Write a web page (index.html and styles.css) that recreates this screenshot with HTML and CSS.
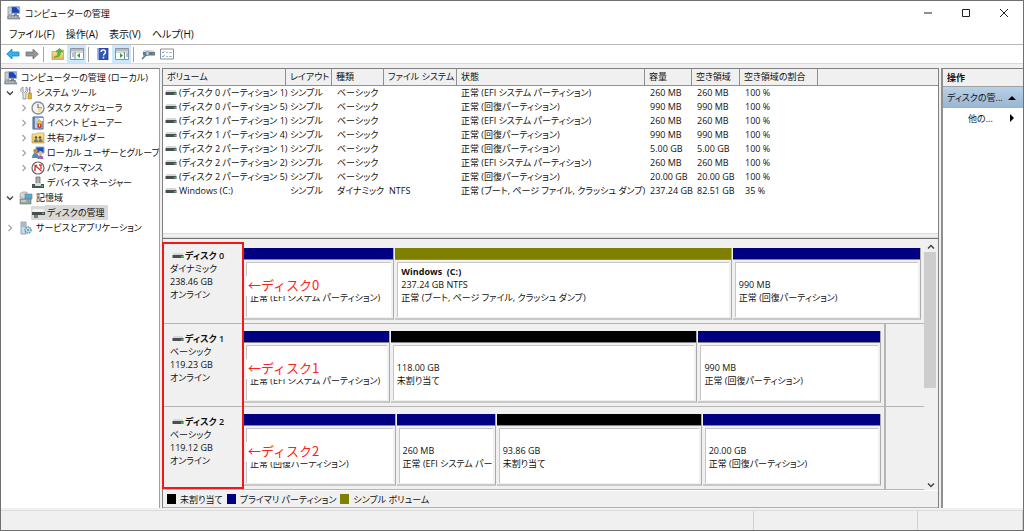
FILE: index.html
```
<!DOCTYPE html>
<html lang="ja">
<head>
<meta charset="utf-8">
<title>コンピューターの管理</title>
<link rel="stylesheet" href="styles.css">
</head>
<body>
<svg class="defs" aria-hidden="true">
  <defs>
    <linearGradient id="gold" x1="0" y1="0" x2="0" y2="1"><stop offset="0" stop-color="#f8e6a0"/><stop offset="1" stop-color="#dfb554"/></linearGradient>
    <symbol id="computer" viewBox="0 0 14 14">
      <path d="M1 1h4v8H1z" fill="#c9ced4" stroke="#7d858e" stroke-width=".7"/>
      <path d="M4.500.7h8.200v6.600H4.500z" fill="#1c43b8" stroke="#aab2ba" stroke-width=".9"/>
      <path d="M9 1.200h3.200v3.500z" fill="#9cc4f4"/>
      <path d="M7 7.500h3v1.500H7zM5.500 9h6v1h-6z" fill="#7b838b"/>
      <path d="M.7 9.800h10.600l1.700 3.200H.7z" fill="#9ba1a8" stroke="#646b72" stroke-width=".6"/>
      <path d="M2 11h1.500M5 11h1.500M8 11h1.500" stroke="#eee" stroke-width=".8"/>
    </symbol>
    <symbol id="disk" viewBox="0 0 12 8">
      <path d="M1.500 1h9L11.500 3H.5z" fill="#d5d7d9"/>
      <path d="M.5 3h11v3H.5z" fill="#4a4e50"/>
      <path d="M9 4h2v1.500H9z" fill="#31d843"/>
    </symbol>
    <symbol id="chevron-down" viewBox="0 0 8 8"><path d="M1 2.500l3 3 3-3" fill="none" stroke="#444" stroke-width="1.400"/></symbol>
    <symbol id="chevron-right" viewBox="0 0 8 8"><path d="M2.500 1l3 3-3 3" fill="none" stroke="#a3a3a3" stroke-width="1.200"/></symbol>
    <symbol id="arrow" viewBox="0 0 14 12"><path d="M.7 6L6 1v3h7v4H6v3z" stroke-width=".8" stroke="currentColor"/></symbol>
    <symbol id="arrow-right" viewBox="0 0 14 12"><path d="M13.300 6L8 1v3H1v4h7v3z" stroke-width=".8" stroke="currentColor"/></symbol>
    <symbol id="pane" viewBox="0 0 14 12">
      <path d="M.5.5h13v11H.5z" fill="#fff" stroke="#8a939c"/>
      <path d="M1 1h12v2H1z" fill="#b6bdc5"/><path d="M1 4h12" stroke="#8a939c" stroke-width=".7"/>
    </symbol>
  </defs>
</svg>
<div class="window">
  <header class="titlebar">
    <svg class="icon14"><use href="#computer"/></svg>
    <h1 class="title">コンピューターの管理</h1>
    <div class="controls">
      <button aria-label="最小化"><svg viewBox="0 0 10 10"><path d="M1 5h8"/></svg></button>
      <button aria-label="最大化"><svg viewBox="0 0 10 10"><path d="M1.500 1.500h7v7h-7z"/></svg></button>
      <button aria-label="閉じる"><svg viewBox="0 0 10 10"><path d="M1 1l8 8M9 1l-8 8"/></svg></button>
    </div>
  </header>
  <nav class="menubar">
    <button>ファイル(F)</button><button>操作(A)</button><button>表示(V)</button><button>ヘルプ(H)</button>
  </nav>
  <div class="toolbar">
    <button aria-label="戻る" class="back"><svg viewBox="0 0 14 12"><use href="#arrow"/></svg></button>
    <button aria-label="進む" class="forward"><svg viewBox="0 0 14 12"><use href="#arrow-right"/></svg></button>
    <span class="sep"></span>
    <button aria-label="上へ"><svg viewBox="0 0 14 12"><path d="M1 3.500h4l1-1.500h6.500v9.500H1z" fill="url(#gold)" stroke="#b99a4e" stroke-width=".7"/><path d="M3 9c3 0 4-2 4-5H5l3.500-3.700L12 4H9.500C9.500 7.500 7.500 10 3 9z" fill="#55bf38" stroke="#38952a" stroke-width=".5"/></svg></button>
    <button aria-label="コンソール ツリー" class="on"><svg viewBox="0 0 14 12"><use href="#pane"/><path d="M5 4v7M2 6h2M2 8h2" stroke="#6e8298"/><path d="M10 5v5L7 7.500z" fill="#27a52b"/></svg></button>
    <span class="sep"></span>
    <button aria-label="ヘルプ"><svg viewBox="0 0 14 12"><path d="M2 0h10v12H2z" fill="#3157b7" stroke="#1b357f" stroke-width=".7"/><path d="M2.500 0v12" stroke="#8ba4df"/><path d="M5 4c0-3 4.500-2.700 4.500 0 0 1.700-2 1.700-2 3.500M7.500 8.800v1.600" fill="none" stroke="#fff" stroke-width="1.400"/></svg></button>
    <button aria-label="操作ウィンドウ" class="on"><svg viewBox="0 0 14 12"><use href="#pane"/><path d="M9.500 4v7M11 6h2M11 8h2" stroke="#6e8298"/><path d="M5 5v5l3-2.500z" fill="#27a52b"/></svg></button>
    <span class="sep"></span>
    <button aria-label="ディスク"><svg viewBox="0 0 14 12"><path d="M3 2h9l2 2.500H1.500z" fill="#d6dade"/><path d="M2 4h12v3.500H2z" fill="#68747d"/><path d="M11.500 5h1.500v1.300h-1.500z" fill="#36d04d"/><path d="M6 6L1 11" stroke="#47718d" stroke-width="1.500"/><circle cx="6.500" cy="5.500" r="2" fill="#a7cbe1" stroke="#55758c" stroke-width=".6"/></svg></button>
    <button aria-label="設定"><svg viewBox="0 0 14 12"><path d="M.5 1h13v10H.5z" fill="#fff" stroke="#8b8f93"/><path d="M2 4l1 1 1.500-2M2 8l1 1 1.500-2" fill="none" stroke="#3d92d4" stroke-width=".8"/><path d="M6 4.500h2M9 4.500h3M6 8.500h2M9 8.500h3" stroke="#9a9ea2" stroke-width=".8"/></svg></button>
  </div>
  <main class="main">
    <nav class="tree">
      <ul>
        <li><div class="node"><svg class="icon14"><use href="#computer"/></svg><span>コンピューターの管理 (ローカル)</span></div></li>
        <li><div class="node"><svg class="chev"><use href="#chevron-down"/></svg><svg class="icon14" viewBox="0 0 14 14"><path d="M4 1v4l1.500 1.500L7 5V1c3 1 2 5 0 6v6H4V7C1 6 1 2 4 1z" fill="#e8eaec" stroke="#70777d" stroke-width=".7"/><path d="M10 1h1.500v6H10z" fill="#90989e"/><path d="M9 7h3.500v6H9z" fill="#e7b029" stroke="#a77c16" stroke-width=".5"/></svg><span>システム ツール</span></div>
          <ul>
            <li><div class="node"><svg class="chev"><use href="#chevron-right"/></svg><svg class="icon14" viewBox="0 0 14 14"><circle cx="7" cy="7" r="6" fill="#eef3f6" stroke="#8d8f91" stroke-width="1.400"/><path d="M7 3v4h4" fill="none" stroke="#4d5d6b"/><path d="M7 7h4a4 4 0 0 1-4 4z" fill="#eed999"/></svg><span>タスク スケジューラ</span></div></li>
            <li><div class="node"><svg class="chev"><use href="#chevron-right"/></svg><svg class="icon14" viewBox="0 0 14 14"><path d="M2 1h10v12H2z" fill="#b9d5ed" stroke="#3e5d89"/><path d="M3 1v12" stroke="#54719f" stroke-width="1.500"/><path d="M8 2h4v3H8z" fill="#fff"/><path d="M8.500 3.500l3 4.500h-6z" fill="#f2cb30" stroke="#b18b14" stroke-width=".5"/><circle cx="8.500" cy="10" r="2.400" fill="#d73831"/><path d="M8.500 8.500v2" stroke="#fff"/></svg><span>イベント ビューアー</span></div></li>
            <li><div class="node"><svg class="chev"><use href="#chevron-right"/></svg><svg class="icon14" viewBox="0 0 14 14"><path d="M1 3h4l1-1h7v10H1z" fill="url(#gold)" stroke="#c49d48" stroke-width=".7"/><circle cx="5" cy="6.500" r="1.200" fill="#654b30"/><circle cx="9" cy="6.500" r="1.200" fill="#654b30"/><path d="M3 11c0-4 4-4 4 0zM7.500 11c0-4 4-4 4 0z" fill="#3f83a9"/></svg><span>共有フォルダー</span></div></li>
            <li><div class="node"><svg class="chev"><use href="#chevron-right"/></svg><svg class="icon14" viewBox="0 0 14 14"><path d="M5 1h8v6H5z" fill="#2450bc" stroke="#9ca7b4"/><circle cx="4.500" cy="5" r="2.300" fill="#bf8a50"/><path d="M1 12c0-7 7-6 7 0z" fill="#548cb1"/><circle cx="9.500" cy="7" r="2" fill="#e2b789"/><path d="M6.500 13c0-5 6-5 6 0z" fill="#9b69af"/></svg><span>ローカル ユーザーとグループ</span></div></li>
            <li><div class="node"><svg class="chev"><use href="#chevron-right"/></svg><svg class="icon14" viewBox="0 0 14 14"><circle cx="7" cy="7" r="6" fill="#fff" stroke="#666" stroke-width="1.200"/><path d="M3.500 4l7 6M4 10V6l2-2M8 4h2v4" fill="none" stroke="#d83534" stroke-width="1.400"/></svg><span>パフォーマンス</span></div></li>
            <li><div class="node"><svg class="chev"></svg><svg class="icon14" viewBox="0 0 14 14"><path d="M5 1h4v7H5z" fill="#aeb2b5" stroke="#555" stroke-width=".7"/><path d="M1 8h12v4H1z" fill="#4e5255"/><path d="M4 7h6v3H4z" fill="#d8dcdf"/><path d="M10.500 9.500H12V11h-1.500z" fill="#3bdc4a"/></svg><span>デバイス マネージャー</span></div></li>
          </ul>
        </li>
        <li><div class="node"><svg class="chev"><use href="#chevron-down"/></svg><svg class="icon14" viewBox="0 0 14 14"><path d="M1 3l2-2h5v6H1z" fill="#d3d7d9" stroke="#8b9297" stroke-width=".6"/><path d="M6 3h7v5H6z" fill="#52a9d8" stroke="#768b98" stroke-width=".7"/><path d="M1 8h11v5H1z" fill="#9da4a8" stroke="#666d71" stroke-width=".6"/><path d="M2 10h5" stroke="#eee"/><path d="M9 10h2v1.500H9z" fill="#42d653"/></svg><span>記憶域</span></div>
          <ul>
            <li><div class="node"><svg class="chev"></svg><svg class="icon14 selected-icon" viewBox="0 0 14 14"><path d="M2 3h10l1.500 3H1z" fill="#f2f3f4"/><path d="M1 6h13v3H1z" fill="#484d50"/><path d="M3 9h4v3H3z" fill="#777f84"/><path d="M11 6.800h2V8h-2z" fill="#35d84a"/></svg><span class="selected">ディスクの管理</span></div></li>
          </ul>
        </li>
        <li><div class="node"><svg class="chev"><use href="#chevron-right"/></svg><svg class="icon14" viewBox="0 0 14 14"><path d="M2 1h5v12H2z" fill="#cbdce6" stroke="#6d8594" stroke-width=".7"/><path d="M3 3h3M3 5h3" stroke="#6d8594" stroke-width=".8"/><circle cx="9" cy="9" r="3" fill="#c7e2f0" stroke="#6397b3" stroke-width="1.500" stroke-dasharray="1.500 .7"/><circle cx="9" cy="9" r="1" fill="#5288a5"/></svg><span>サービスとアプリケーション</span></div></li>
      </ul>
    </nav>
    <section class="center">
      <div class="volumes">
        <table>
          <colgroup><col class="c-volume"><col class="c-layout"><col class="c-kind"><col class="c-fs"><col class="c-state"><col class="c-size"><col class="c-free"><col class="c-ratio"><col></colgroup>
          <thead><tr><th>ボリューム</th><th>レイアウト</th><th>種類</th><th>ファイル システム</th><th>状態</th><th>容量</th><th>空き領域</th><th>空き領域の割合</th><th></th></tr></thead>
          <tbody>
            <tr><td><svg class="disk"><use href="#disk"/></svg>(ディスク 0 パーティション 1)</td><td>シンプル</td><td>ベーシック</td><td></td><td>正常 (EFI システム パーティション)</td><td>260 MB</td><td>260 MB</td><td>100 %</td><td></td></tr>
            <tr><td><svg class="disk"><use href="#disk"/></svg>(ディスク 0 パーティション 5)</td><td>シンプル</td><td>ベーシック</td><td></td><td>正常 (回復パーティション)</td><td>990 MB</td><td>990 MB</td><td>100 %</td><td></td></tr>
            <tr><td><svg class="disk"><use href="#disk"/></svg>(ディスク 1 パーティション 1)</td><td>シンプル</td><td>ベーシック</td><td></td><td>正常 (EFI システム パーティション)</td><td>260 MB</td><td>260 MB</td><td>100 %</td><td></td></tr>
            <tr><td><svg class="disk"><use href="#disk"/></svg>(ディスク 1 パーティション 4)</td><td>シンプル</td><td>ベーシック</td><td></td><td>正常 (回復パーティション)</td><td>990 MB</td><td>990 MB</td><td>100 %</td><td></td></tr>
            <tr><td><svg class="disk"><use href="#disk"/></svg>(ディスク 2 パーティション 1)</td><td>シンプル</td><td>ベーシック</td><td></td><td>正常 (回復パーティション)</td><td>5.00 GB</td><td>5.00 GB</td><td>100 %</td><td></td></tr>
            <tr><td><svg class="disk"><use href="#disk"/></svg>(ディスク 2 パーティション 2)</td><td>シンプル</td><td>ベーシック</td><td></td><td>正常 (EFI システム パーティション)</td><td>260 MB</td><td>260 MB</td><td>100 %</td><td></td></tr>
            <tr><td><svg class="disk"><use href="#disk"/></svg>(ディスク 2 パーティション 5)</td><td>シンプル</td><td>ベーシック</td><td></td><td>正常 (回復パーティション)</td><td>20.00 GB</td><td>20.00 GB</td><td>100 %</td><td></td></tr>
            <tr><td><svg class="disk"><use href="#disk"/></svg>Windows (C:)</td><td>シンプル</td><td>ダイナミック</td><td>NTFS</td><td>正常 (ブート, ページ ファイル, クラッシュ ダンプ)</td><td>237.24 GB</td><td>82.51 GB</td><td>35 %</td><td></td></tr>
          </tbody>
        </table>
      </div>
      <div class="splitter"></div>
      <div class="disks">
        <div class="disk-list">
          <article class="disk-row">
            <div class="disk-info"><h2><svg class="disk"><use href="#disk"/></svg>ディスク 0</h2><p>ダイナミック</p><p>238.46 GB</p><p>オンライン</p></div>
            <div class="parts wide">
              <div class="part" style="flex-grow:150"><div class="body"><p>&nbsp;</p><p>正常 (EFI システム パーティション)</p></div></div>
              <div class="part simple" style="flex-grow:337"><div class="body named"><p><b>Windows&nbsp; (C:)</b></p><p>237.24 GB NTFS</p><p>正常 (ブート, ページ ファイル, クラッシュ ダンプ)</p></div></div>
              <div class="part" style="flex-grow:188"><div class="body"><p>990 MB</p><p>正常 (回復パーティション)</p></div></div>
            </div>
            <span class="note">←ディスク0</span>
          </article>
          <article class="disk-row">
            <div class="disk-info"><h2><svg class="disk"><use href="#disk"/></svg>ディスク 1</h2><p>ベーシック</p><p>119.23 GB</p><p>オンライン</p></div>
            <div class="parts">
              <div class="part" style="flex-grow:146"><div class="body"><p>&nbsp;</p><p>正常 (EFI システム パーティション)</p></div></div>
              <div class="part free" style="flex-grow:308"><div class="body"><p>118.00 GB</p><p>未割り当て</p></div></div>
              <div class="part" style="flex-grow:183"><div class="body"><p>990 MB</p><p>正常 (回復パーティション)</p></div></div>
            </div>
            <span class="note">←ディスク1</span>
          </article>
          <article class="disk-row">
            <div class="disk-info"><h2><svg class="disk"><use href="#disk"/></svg>ディスク 2</h2><p>ベーシック</p><p>119.12 GB</p><p>オンライン</p></div>
            <div class="parts">
              <div class="part" style="flex-grow:152"><div class="body"><p>&nbsp;</p><p>正常 (回復パーティション)</p></div></div>
              <div class="part" style="flex-grow:99"><div class="body"><p>260 MB</p><p>正常 (EFI システム パー</p></div></div>
              <div class="part free" style="flex-grow:206"><div class="body"><p>93.86 GB</p><p>未割り当て</p></div></div>
              <div class="part" style="flex-grow:179"><div class="body"><p>20.00 GB</p><p>正常 (回復パーティション)</p></div></div>
            </div>
            <span class="note">←ディスク2</span>
          </article>
          <div class="highlight"></div>
        </div>
        <div class="scrollbar">
          <button aria-label="上へスクロール"><svg viewBox="0 0 8 8"><path d="M1 5.500l3-3 3 3"/></svg></button>
          <div class="track"><div class="thumb"></div></div>
          <button aria-label="下へスクロール"><svg viewBox="0 0 8 8"><path d="M1 2.500l3 3 3-3"/></svg></button>
        </div>
      </div>
      <div class="legend"><span class="key">未割り当て</span><span class="key k-primary">プライマリ パーティション</span><span class="key k-simple">シンプル ボリューム</span></div>
    </section>
    <aside class="actions">
      <h2>操作</h2>
      <button class="group"><span>ディスクの管...</span><svg viewBox="0 0 8 8"><path d="M0 6l4-4 4 4z"/></svg></button>
      <button class="more"><span>他の...</span><svg viewBox="0 0 8 8"><path d="M2 0l4 4-4 4z"/></svg></button>
    </aside>
  </main>
  <footer class="status"><span></span><span></span><span></span></footer>
</div>
</body>
</html>
```
FILE: styles.css
```
* { box-sizing: border-box; }
body {
  margin: 0;
  font: 9px/13px "Open Sans", "Noto Sans CJK JP", sans-serif;
  font-feature-settings: "palt";
  color: #111;
  background: #f0f0f0;
}
h1, h2, p, ul { margin: 0; padding: 0; font-size: inherit; list-style: none; }
button { border: 0; padding: 0; background: none; font: inherit; font-feature-settings: inherit; color: inherit; }
svg { display: block; flex: none; }
.defs { position: absolute; width: 0; height: 0; }
.icon14 { width: 14px; height: 14px; }
.disk { width: 12px; height: 8px; }

.window { display: flex; flex-direction: column; min-height: 100vh; border: 1px solid #707070; white-space: nowrap; }
.titlebar { display: flex; align-items: center; height: 24px; padding-left: 6px; gap: 4px; background: #fff; }
.title { flex: 1; font-weight: 400; }
.controls { display: flex; }
.controls button { width: 38px; height: 24px; display: grid; place-items: center; }
.controls svg { width: 10px; height: 10px; fill: none; stroke: #222; }
.menubar { display: flex; gap: 11px; height: 20px; padding-left: 8px; font-size: 10px; background: #fff; border-bottom: 1px solid #b8b8b8; }
.toolbar { display: flex; align-items: center; height: 19px; padding-left: 2px; background: #fff; border-bottom: 1px solid #dadada; }
.toolbar button { width: 19px; height: 18px; display: grid; place-items: center; }
.toolbar svg { width: 14px; height: 12px; }
.toolbar .on { background: #cce8ff; }
.back { color: #1687c7; fill: #37aef0; }
.forward { color: #707376; fill: #929598; }
.sep { width: 1px; height: 15px; margin: 0 4px 0 2px; background: #a5a5a5; }

.main { flex: 1; display: grid; grid-template-columns: 159px minmax(0, 1fr) 82px; column-gap: 2px; padding: 4px 0 2px; }
.tree { background: #fff; border-top: 1px solid #808080; border-right: 1px solid #a0a0a0; padding: 1px 0 0 3px; overflow: hidden; }
.tree ul ul { padding-left: 14px; }
.node { display: flex; align-items: center; height: 15px; gap: 3px; }
.chev { width: 8px; height: 8px; margin: 0 2px; }
.tree ul ul .node { gap: 2px; }
.tree ul ul .chev { margin-right: 1px; }
.selected { background: #d9d9d9; padding: 1px 3px 1px 2px; margin-left: -2px; }
.selected-icon { background: #d9d9d9; }

.center { display: flex; flex-direction: column; min-width: 0; border: solid #808080; border-width: 1px 1px 0 1px; }
.volumes { flex: 1; background: #fff; }
table { width: 100%; table-layout: fixed; border-collapse: separate; border-spacing: 0; }
.c-volume { width: 123px; } .c-layout { width: 46px; } .c-kind { width: 52px; } .c-fs { width: 73px; }
.c-state { width: 188px; } .c-size { width: 47px; } .c-free { width: 48px; } .c-ratio { width: 78px; }
th { height: 17px; padding: 0 0 0 4px; font-weight: 400; text-align: left; line-height: 16px; background: #f0f0f0; border-right: 1px solid #909090; border-bottom: 1px solid #909090; }
th:last-child { border-right: 0; }
td { height: 14px; padding: 0 0 0 5px; line-height: 14px; }
td:nth-child(2), td:nth-child(5) { padding-left: 4px; }
td:first-child { display: flex; align-items: center; gap: 2px; padding-left: 2px; }
.splitter { height: 5px; border-top: 1px solid #ddd; border-bottom: 1px solid #ddd; }

.disks { display: flex; border-top: 1px solid #707070; padding-top: 2px; }
.disk-list { position: relative; flex: 1; min-width: 0; }
.disk-row { position: relative; display: flex; height: 83px; border-bottom: 1px solid #b5b5b5; }
.disk-info { width: 81px; padding: 8px 0 0 7px; }
.disk-info h2 { display: flex; align-items: center; gap: 1px; padding-left: 2px; font-weight: 600; }
.parts { display: flex; flex: 0 1 642px; gap: 1px; padding: 7px 3px 3px 0; border-right: 2px solid #b5b5b5; }
.parts.wide { flex: 1; padding-right: 3px; border-right: 0; }
.part { flex: 1 1 0; min-width: 0; display: flex; flex-direction: column; border-right: 1px solid #aaa; border-bottom: 2px solid #c8c8c8; }
.part::before { content: ""; height: 11px; background: #000080; border-bottom: 1px solid #888; }
.part.simple::before { background: #808000; }
.part.free::before { background: #000; }
.body { flex: 1; margin: 2px 2px 1px 2px; padding: 15px 0 0 3px; background: #fff; border: solid #c5c5c5; border-width: 1px 0 0 1px; overflow: hidden; }
.body.named { padding-top: 2px; }
.note { position: absolute; left: 83px; top: 35px; width: 79px; height: 20px; background: #fff; color: #ff2020; font: 400 13px/17px "Noto Sans CJK JP", sans-serif; font-feature-settings: normal; padding-left: 2px; }
.highlight { position: absolute; left: -1px; top: 1px; width: 82px; height: 247px; border: 2px solid #f01818; }
.scrollbar { width: 14px; display: flex; flex-direction: column; }
.scrollbar button { height: 11px; display: grid; place-items: center; }
.scrollbar svg { width: 8px; height: 8px; fill: none; stroke: #444; stroke-width: 1.5; }
.track { flex: 1; }
.thumb { width: 12px; height: 60%; background: #cdcdcd; }
.legend { display: flex; align-items: center; gap: 4px; height: 18px; padding-left: 4px; border-top: 1px solid #fff; border-bottom: 1px solid #b0b0b0; }
.key { display: flex; align-items: center; gap: 4px; }
.key::before { content: ""; width: 9px; height: 10px; background: #000; }
.k-primary::before { background: #000080; }
.k-simple::before { background: #808000; }

.actions { display: flex; flex-direction: column; background: #fff; border-top: 1px solid #808080; border-left: 2px solid #909090; }
.actions h2 { height: 18px; padding-left: 4px; line-height: 18px; font-weight: 600; background: #f0f0f0; border-bottom: 1px solid #a0a0a0; }
.actions button { display: flex; align-items: center; justify-content: space-between; height: 21px; padding: 0 7px 0 4px; }
.actions svg { width: 8px; height: 8px; fill: #000; }
.actions .group { background: linear-gradient(#b9d1ea, #99b4d1); }
.actions .more { height: 20px; padding-left: 25px; }
.status { display: grid; grid-template-columns: 753fr 164fr 105fr; height: 20px; border-top: 1px solid #dcdcdc; }
.status span { border-right: 1px solid #d0d0d0; }
```
